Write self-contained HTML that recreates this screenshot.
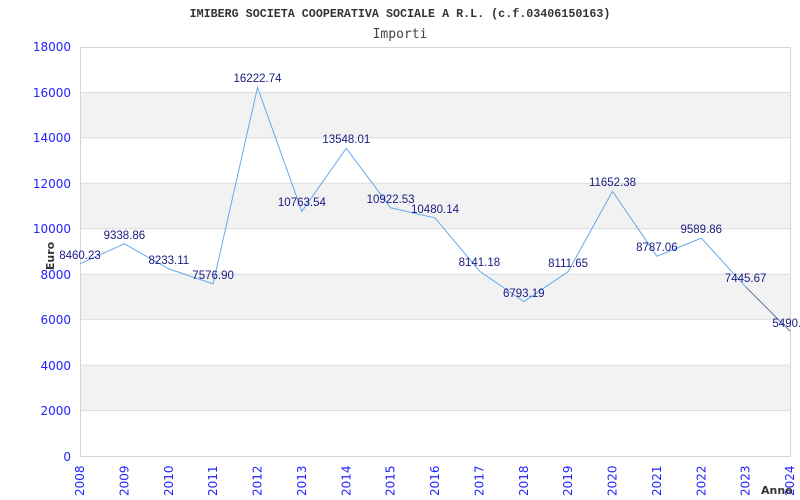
<!DOCTYPE html>
<html><head><meta charset="utf-8"><style>html,body{margin:0;padding:0;background:#fff}svg{display:block}</style></head><body>
<svg width="800" height="500" xmlns="http://www.w3.org/2000/svg">
<rect width="800" height="500" fill="#fff"/>
<text x="400" y="17" text-anchor="middle" font-family="Liberation Mono, monospace" font-weight="bold" font-size="11.7" fill="#333">IMIBERG SOCIETA COOPERATIVA SOCIALE A R.L. (c.f.03406150163)</text>
<text x="400" y="38" text-anchor="middle" font-family="DejaVu Sans Mono, monospace" font-size="13" fill="#444">Importi</text>
<g fill="#f2f2f2">
<rect x="80" y="92.4" width="710" height="45.4"/>
<rect x="80" y="183.3" width="710" height="45.4"/>
<rect x="80" y="274.2" width="710" height="45.4"/>
<rect x="80" y="365.1" width="710" height="45.4"/>
</g>
<g stroke="#ddd" stroke-width="1">
<line x1="80" y1="92.5" x2="790" y2="92.5"/><line x1="80" y1="137.9" x2="790" y2="137.9"/>
<line x1="80" y1="183.3" x2="790" y2="183.3"/><line x1="80" y1="228.7" x2="790" y2="228.7"/>
<line x1="80" y1="274.2" x2="790" y2="274.2"/><line x1="80" y1="319.6" x2="790" y2="319.6"/>
<line x1="80" y1="365.1" x2="790" y2="365.1"/><line x1="80" y1="410.5" x2="790" y2="410.5"/>
</g>
<rect x="80.5" y="47.5" width="710" height="409" fill="none" stroke="#d4d4d4"/>
<g font-family="DejaVu Sans, sans-serif" font-size="12" fill="#2222ff" text-anchor="end">
<text x="71" y="51">18000</text><text x="71" y="97">16000</text><text x="71" y="142">14000</text>
<text x="71" y="188">12000</text><text x="71" y="233">10000</text><text x="71" y="279">8000</text>
<text x="71" y="324">6000</text><text x="71" y="370">4000</text><text x="71" y="415">2000</text>
<text x="71" y="461">0</text>
</g>
<g font-family="DejaVu Sans, sans-serif" font-size="12" fill="#2222ff">
<text transform="translate(84,496) rotate(-90)">2008</text>
<text transform="translate(128.4,496) rotate(-90)">2009</text>
<text transform="translate(172.8,496) rotate(-90)">2010</text>
<text transform="translate(217.1,496) rotate(-90)">2011</text>
<text transform="translate(261.5,496) rotate(-90)">2012</text>
<text transform="translate(305.9,496) rotate(-90)">2013</text>
<text transform="translate(350.3,496) rotate(-90)">2014</text>
<text transform="translate(394.6,496) rotate(-90)">2015</text>
<text transform="translate(439,496) rotate(-90)">2016</text>
<text transform="translate(483.4,496) rotate(-90)">2017</text>
<text transform="translate(527.8,496) rotate(-90)">2018</text>
<text transform="translate(572.1,496) rotate(-90)">2019</text>
<text transform="translate(616.5,496) rotate(-90)">2020</text>
<text transform="translate(660.9,496) rotate(-90)">2021</text>
<text transform="translate(705.3,496) rotate(-90)">2022</text>
<text transform="translate(749.6,496) rotate(-90)">2023</text>
<text transform="translate(794,496) rotate(-90)">2024</text>
</g>
<text transform="translate(54,256) rotate(-90)" text-anchor="middle" font-family="DejaVu Sans, sans-serif" font-weight="bold" font-size="11" fill="#333">Euro</text>
<text x="761" y="494" font-family="DejaVu Sans, sans-serif" font-weight="bold" font-size="11" fill="#333">Anno</text>
<polyline fill="none" stroke="#66aaee" stroke-width="1" points="80,263.8 124.4,243.8 168.8,268.9 213.1,283.8 257.5,87.4 301.9,211.4 346.3,148.2 390.6,207.8 435,217.9 479.4,271 523.8,301.6 568.1,271.7 612.5,191.2 656.9,256.3 701.3,238.1 745.6,286.8"/>
<line x1="745.6" y1="286.8" x2="790" y2="331.2" stroke="#557799" stroke-width="1"/>
<g font-family="Liberation Sans, sans-serif" font-size="11.5" fill="#1a1a80" text-anchor="middle">
<text x="80" y="259">8460.23</text>
<text x="124.4" y="239">9338.86</text>
<text x="168.8" y="264">8233.11</text>
<text x="213.1" y="279">7576.90</text>
<text x="257.5" y="82">16222.74</text>
<text x="301.9" y="206">10763.54</text>
<text x="346.3" y="143">13548.01</text>
<text x="390.6" y="203">10922.53</text>
<text x="435" y="213">10480.14</text>
<text x="479.4" y="266">8141.18</text>
<text x="523.8" y="297">6793.19</text>
<text x="568.1" y="267">8111.65</text>
<text x="612.5" y="186">11652.38</text>
<text x="656.9" y="251">8787.06</text>
<text x="701.3" y="233">9589.86</text>
<text x="745.6" y="282">7445.67</text>
<text x="790" y="327">5490.3</text>
</g>
</svg>
</body></html>
